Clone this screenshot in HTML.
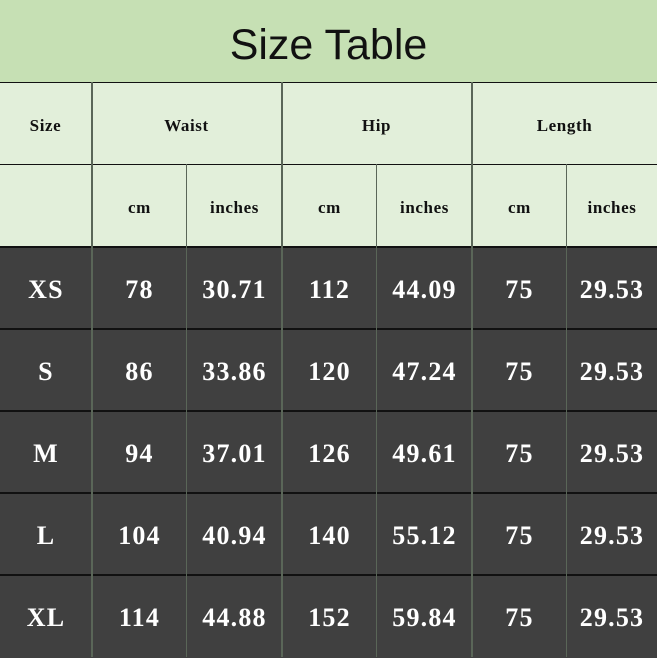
<!DOCTYPE html><html><head><style>
body{margin:0;width:657px;height:657px;position:relative;overflow:hidden;background:#404040;font-family:"Liberation Serif",serif}
.t{position:absolute;left:0;top:0;width:657px;height:82px;background:#c6e0b4;font-family:"Liberation Sans",sans-serif;font-size:43px;text-align:center;line-height:90px;color:#111}
.h{position:absolute;left:0;top:82px;width:657px;height:164px;background:#e2efda}
.c{position:absolute;display:flex;align-items:center;justify-content:center;font-weight:bold}
.hc{font-size:17px;color:#111;letter-spacing:0.6px;padding-top:3px;box-sizing:border-box}
.dc{font-size:26px;color:#fff;letter-spacing:1.2px;padding-top:2px;box-sizing:border-box}
.l{position:absolute;background:#111}
</style></head><body>
<div class="t">Size Table</div>
<div class="h"></div>
<div class="l" style="left:0;top:82px;width:657px;height:1px"></div>
<div class="l" style="left:0;top:164px;width:657px;height:1px"></div>
<div class="l" style="left:0;top:246px;width:657px;height:2px"></div>
<div class="l" style="left:0;top:328px;width:657px;height:2px"></div>
<div class="l" style="left:0;top:410px;width:657px;height:2px"></div>
<div class="l" style="left:0;top:492px;width:657px;height:2px"></div>
<div class="l" style="left:0;top:574px;width:657px;height:2px"></div>
<div class="l" style="left:91px;top:82px;width:2px;height:575px;background:#5a6658"></div>
<div class="l" style="left:281px;top:82px;width:2px;height:575px;background:#5a6658"></div>
<div class="l" style="left:471px;top:82px;width:2px;height:575px;background:#5a6658"></div>
<div class="l" style="left:186px;top:164px;width:1px;height:493px;background:#5a6658"></div>
<div class="l" style="left:376px;top:164px;width:1px;height:493px;background:#5a6658"></div>
<div class="l" style="left:566px;top:164px;width:1px;height:493px;background:#5a6658"></div>
<div id="g"></div>
<script>
var xs=[0,92,187,282,377,472,567,657];
var g=document.getElementById('g'),h='';
function cell(x0,x1,y,t,cls){h+='<div class="c '+cls+'" style="left:'+x0+'px;width:'+(x1-x0)+'px;top:'+y+'px;height:82px">'+t+'</div>';}
cell(0,91,83,'Size','hc');cell(92,281,83,'Waist','hc');cell(282,471,83,'Hip','hc');cell(472,657,83,'Length','hc');
var sub=['','cm','inches','cm','inches','cm','inches'];
for(var i=0;i<7;i++)cell(xs[i],xs[i+1],165,sub[i],'hc');
var d=[['XS','78','30.71','112','44.09','75','29.53'],['S','86','33.86','120','47.24','75','29.53'],['M','94','37.01','126','49.61','75','29.53'],['L','104','40.94','140','55.12','75','29.53'],['XL','114','44.88','152','59.84','75','29.53']];
for(var r=0;r<5;r++)for(var i=0;i<7;i++)cell(xs[i],xs[i+1],248+r*82,d[r][i],'dc');
g.innerHTML=h;
</script>
</body></html>
